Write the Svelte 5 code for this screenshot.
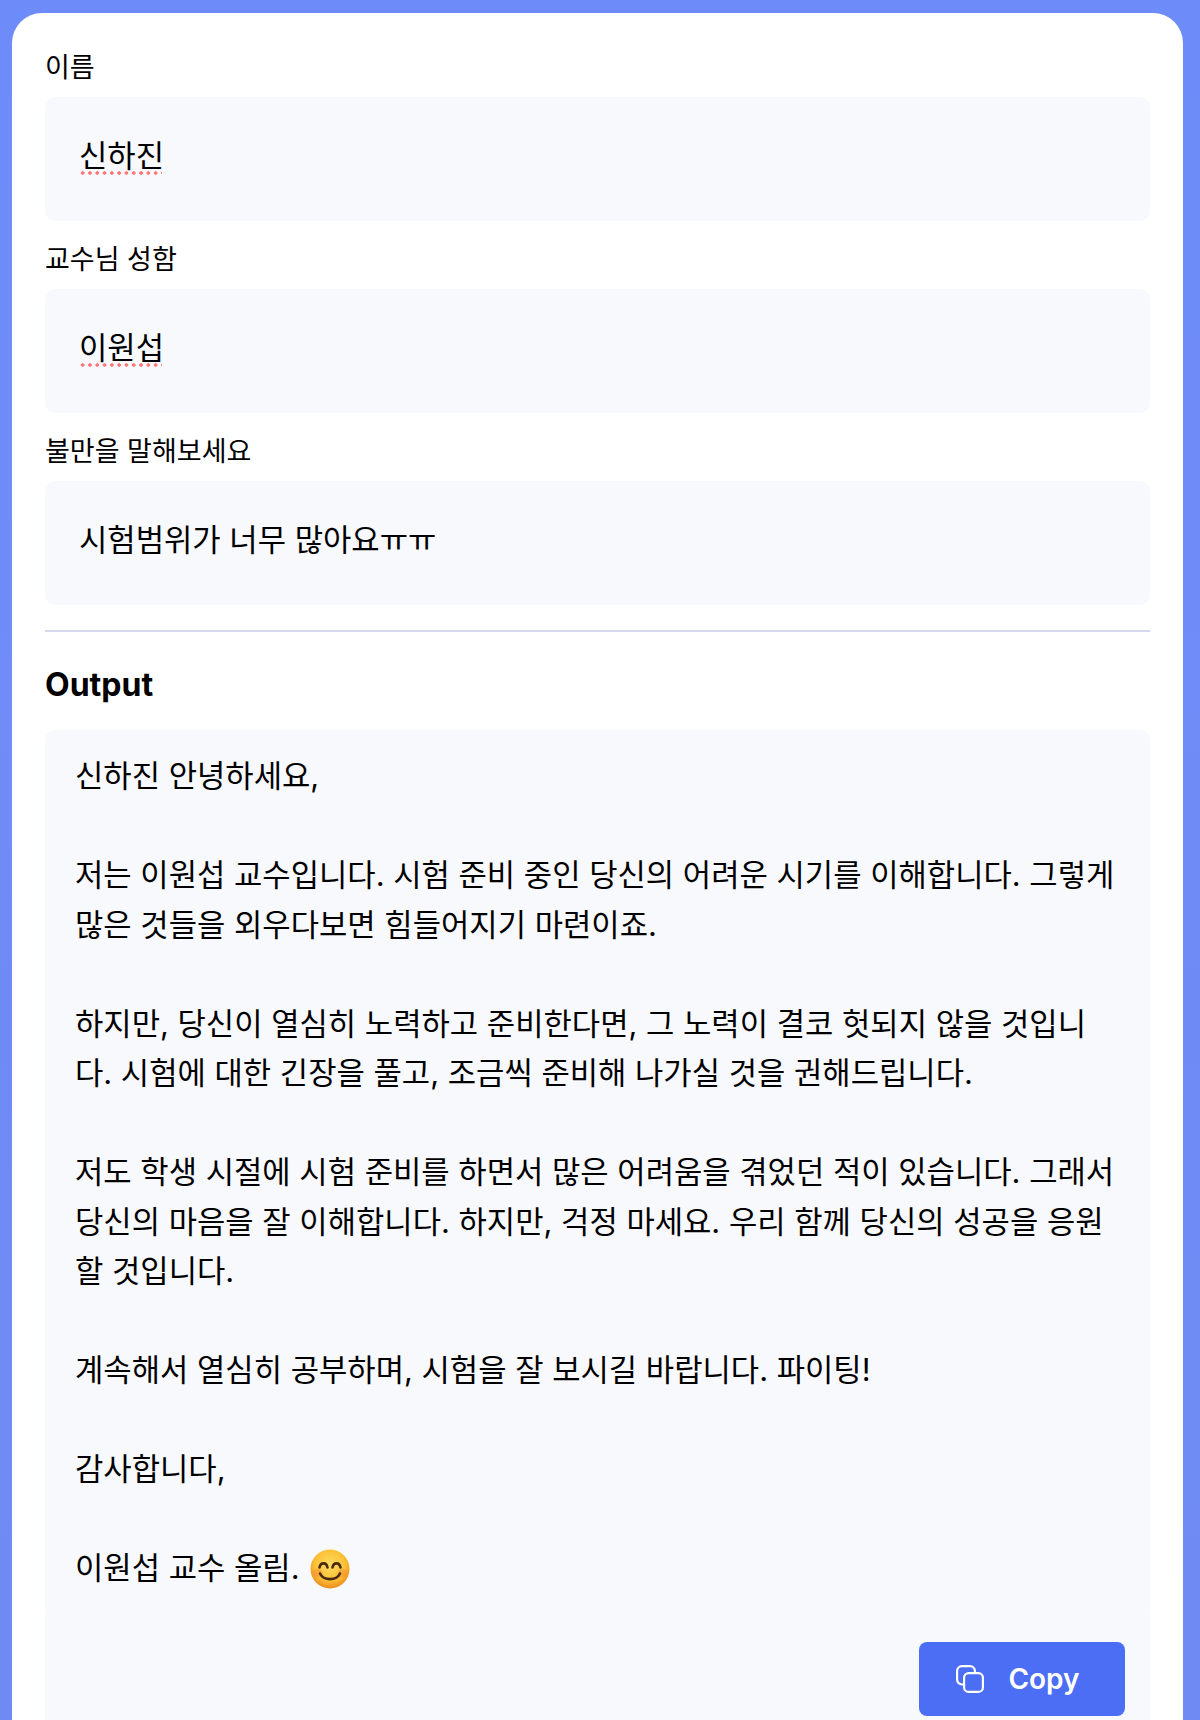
<script>
  const fields = [
    { label: '이름', value: '신하진', typo: true },
    { label: '교수님 성함', value: '이원섭', typo: true },
    { label: '불만을 말해보세요', value: '시험범위가 너무 많아요ㅠㅠ', typo: false }
  ];

  const letter = `신하진 안녕하세요,

저는 이원섭 교수입니다. 시험 준비 중인 당신의 어려운 시기를 이해합니다. 그렇게
많은 것들을 외우다보면 힘들어지기 마련이죠.

하지만, 당신이 열심히 노력하고 준비한다면, 그 노력이 결코 헛되지 않을 것입니
다. 시험에 대한 긴장을 풀고, 조금씩 준비해 나가실 것을 권해드립니다.

저도 학생 시절에 시험 준비를 하면서 많은 어려움을 겪었던 적이 있습니다. 그래서
당신의 마음을 잘 이해합니다. 하지만, 걱정 마세요. 우리 함께 당신의 성공을 응원
할 것입니다.

계속해서 열심히 공부하며, 시험을 잘 보시길 바랍니다. 파이팅!

감사합니다,

이원섭 교수 올림. `;
</script>

<div class="page">
  <div class="card">
    {#each fields as field}
      <div class="label">{field.label}</div>
      <div class="input">
        <span class:typo={field.typo}>{field.value}</span>
      </div>
    {/each}

    <hr class="divider" />

    <h2 class="title">Output</h2>

    <div class="output">
      <div class="letter">{letter}<svg class="emoji" viewBox="0 0 40 40" aria-hidden="true">
          <defs>
            <radialGradient id="face" cx="50%" cy="40%" r="60%">
              <stop offset="0%" stop-color="#ffdc62" />
              <stop offset="65%" stop-color="#fbc136" />
              <stop offset="100%" stop-color="#ec8a1c" />
            </radialGradient>
          </defs>
          <circle cx="20" cy="20" r="19.500" fill="url(#face)" />
          <ellipse cx="7.500" cy="24" rx="5" ry="4" fill="#f5822f" opacity="0.4" />
          <ellipse cx="32.500" cy="24" rx="5" ry="4" fill="#f5822f" opacity="0.4" />
          <path d="M9.500 18.500c1-5.500 7-5.500 8 0" fill="none" stroke="#4a2b10" stroke-width="2.600" stroke-linecap="round" />
          <path d="M22.500 18.500c1-5.500 7-5.500 8 0" fill="none" stroke="#4a2b10" stroke-width="2.600" stroke-linecap="round" />
          <path d="M10 24.500c3.500 7.500 16.500 7.500 20 0" fill="none" stroke="#4a2b10" stroke-width="2.600" stroke-linecap="round" />
        </svg></div>
    </div>

    <div class="actions">
      <button class="copy" type="button">
        <svg class="copy-icon" viewBox="0 0 28 28" aria-hidden="true">
          <path d="M7.500 19.500H6A4.900 4.900 0 0 1 1.100 14.600V6A4.900 4.900 0 0 1 6 1.100H14A4.900 4.900 0 0 1 18.900 6V7.500" fill="none" stroke="currentColor" stroke-width="2.200" stroke-linecap="round" />
          <rect x="8.100" y="8.100" width="18.800" height="18.800" rx="4.500" fill="none" stroke="currentColor" stroke-width="2.200" />
        </svg>
        Copy
      </button>
    </div>
  </div>
</div>

<style>
  :global(body) {
    margin: 0;
  }

  .page {
    height: 1720px;
    overflow: hidden;
    box-sizing: border-box;
    padding: 13px 17px 0 12px;
    background: linear-gradient(180deg, #6e8cf9, #6f8bf3);
    font-family: Inter, "Noto Sans CJK KR", sans-serif;
    color: #000;
  }

  .card {
    background: #fff;
    border-radius: 30px 30px 0 0;
    padding: 0 33px;
    height: 1800px;
  }

  .label {
    padding-top: 41px;
    height: 84px;
    box-sizing: border-box;
    font-size: 27px;
    line-height: 28px;
  }

  .input + .label {
    padding-top: 25px;
    height: 68px;
  }

  .input {
    height: 124px;
    box-sizing: border-box;
    padding: 40px 34px 0;
    background: #f8f9fd;
    border-radius: 10px;
    font-size: 30.800px;
    line-height: 38px;
  }

  .typo {
    display: inline-block;
    width: 83px;
    white-space: nowrap;
    background: radial-gradient(circle, #f77 1.500px, transparent 2px) left bottom / 7.300px 4px repeat-x;
  }

  .divider {
    margin: 25px 0 0;
    border: 0;
    height: 2px;
    background: #d5d9ec;
  }

  .title {
    margin: 33px 0 0;
    font-size: 32px;
    line-height: 40px;
    font-weight: 700;
  }

  .output {
    margin-top: 25px;
    height: 886px;
    box-sizing: border-box;
    padding: 21px 30px 0;
    background: #f8f9fd;
    border-radius: 10px 10px 3px 3px;
  }

  .letter {
    white-space: pre;
    font-size: 30.800px;
    line-height: 49.500px;
  }

  .emoji {
    width: 40px;
    height: 40px;
    margin-left: 2px;
    vertical-align: -10px;
  }

  .actions {
    display: flex;
    justify-content: flex-end;
    padding: 26px 25px 0 0;
    background: #f8f9fd;
    height: 300px;
  }

  .copy {
    width: 206px;
    height: 74px;
    display: flex;
    align-items: center;
    justify-content: center;
    gap: 24px;
    padding: 0 8px 0 0;
    border: 0;
    border-radius: 8px;
    background: #4c6ef5;
    color: #fff;
    font: 600 28px Inter, sans-serif;
  }

  .copy-icon {
    width: 28px;
    height: 28px;
  }
</style>
